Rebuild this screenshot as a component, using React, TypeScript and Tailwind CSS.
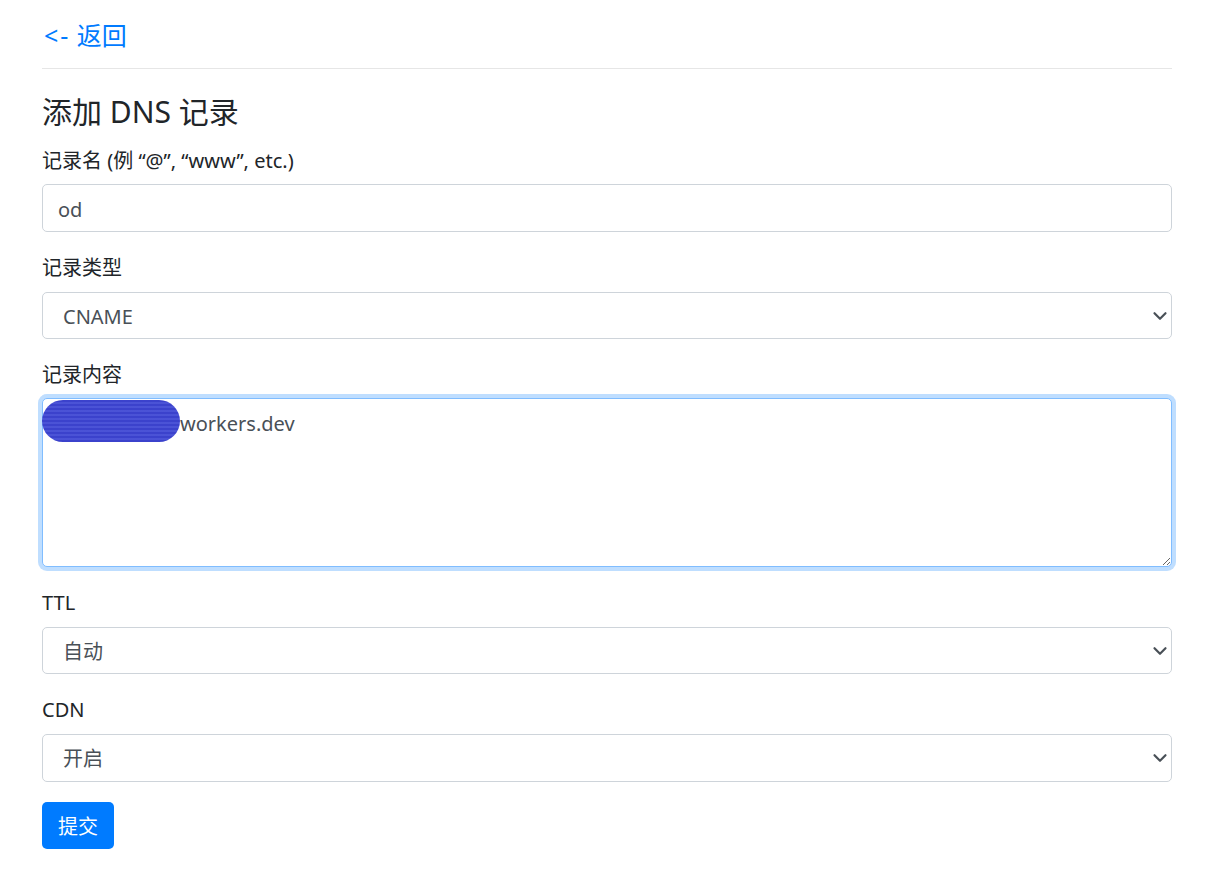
import { ChevronDown } from "lucide-react";

const fieldBox =
  "block w-full rounded-[5px] border border-[#ced4da] bg-white text-[20px] leading-[30px] text-[#495057] outline-none";

function SelectField({
  label,
  value,
  height = "h-[47px]",
}: {
  label: string;
  value: string;
  height?: string;
}) {
  return (
    <div className="mb-[20px]">
      <label className="block pt-[1px] mb-[9px]">{label}</label>
      <div className="relative">
        <select
          className={`${fieldBox} ${height} appearance-none pl-[20px] pr-[40px] pt-[2px]`}
          defaultValue={value}
        >
          <option>{value}</option>
        </select>
        <ChevronDown
          size={22}
          strokeWidth={2.4}
          className="absolute right-[1px] top-1/2 -translate-y-1/2 text-[#495057] pointer-events-none"
        />
      </div>
    </div>
  );
}

export default function App() {
  return (
    <div className="min-h-[882px] bg-white pl-[42px] pr-[39px] pt-[20px] text-[20px] leading-[30px] text-[#212529] font-['Noto_Sans','Noto_Sans_CJK_SC',sans-serif]">
      {/* back link */}
      <a href="#" className="block pl-[2px] text-[25px] leading-[30px] text-[#007bff]">
        <span className="tracking-[2px]">&lt;-</span> 返回
      </a>
      <hr className="mt-[18px] border-0 border-t border-[#e6e6e6]" />

      <h3 className="mt-[25px] mb-[15px] text-[30px] leading-[36px] font-normal">
        添加 DNS 记录
      </h3>

      <form onSubmit={(e) => e.preventDefault()}>
        <div className="mb-[20px]">
          <label className="block pt-[1px] mb-[8px]">记录名 (例 “@”, “www”, etc.)</label>
          <input className={`${fieldBox} h-[48px] px-[15px] pt-[2px]`} defaultValue="od" />
        </div>

        <SelectField label="记录类型" value="CNAME" />

        <div className="mb-[20px]">
          <label className="block pt-[1px] mb-[8px]">记录内容</label>
          <div className="relative">
            <textarea
              className="block w-full h-[169px] rounded-[5px] border border-[#80bdff] bg-white px-[15px] pt-[10px] indent-[122px] text-[20px] leading-[30px] text-[#495057] outline-none shadow-[0_0_0_4px_rgba(0,123,255,0.25)]"
              defaultValue="workers.dev"
            />
            {/* redacted part of the record */}
            <div className="absolute left-0 top-[2px] w-[138px] h-[42px] rounded-[21px] bg-[#3b42cc] bg-[repeating-linear-gradient(0deg,#3b42cc_0px,#3b42cc_2px,#5a63e0_3px,#3b42cc_4px)]" />
          </div>
        </div>

        <SelectField label="TTL" value="自动" />
        <SelectField label="CDN" value="开启" height="h-[48px]" />

        <button
          type="submit"
          className="block h-[47px] rounded-[5px] bg-[#007bff] px-[16px] pt-[2px] text-[20px] leading-[30px] text-white"
        >
          提交
        </button>
      </form>
    </div>
  );
}
